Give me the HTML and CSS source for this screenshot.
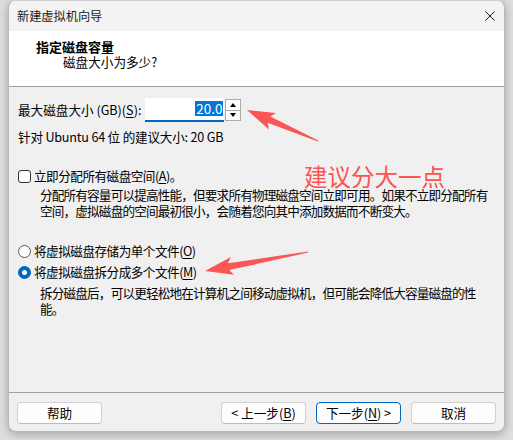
FILE: index.html
```html
<!DOCTYPE html>
<html lang="zh-CN">
<head>
    <meta charset="UTF-8">
    <title>新建虚拟机向导</title>
    <link rel="stylesheet" href="styles.css">
</head>
<body>
    <div class="window">
        <!-- Title bar -->
        <div class="titlebar">
            <span class="title">新建虚拟机向导</span>
            <svg class="close" width="10" height="10" viewBox="0 0 10 10">
                <path d="M0.5 0.5 L9.5 9.5 M9.5 0.5 L0.5 9.5" stroke="#1a1a1a" stroke-width="1" fill="none"/>
            </svg>
        </div>

        <!-- Page header -->
        <div class="header">
            <div class="header-title">指定磁盘容量</div>
            <div class="header-sub">磁盘大小为多少?</div>
        </div>

        <!-- Page content -->
        <div class="content">
            <div class="size-row">
                <span class="size-label">最大磁盘大小 (GB)(<u>S</u>):</span>
                <div class="spin">
                    <div class="spin-input"><span class="selected">20.0</span></div>
                    <div class="spin-btns">
                        <div class="spin-btn"><span class="tri-up"></span></div>
                        <div class="spin-btn"><span class="tri-down"></span></div>
                    </div>
                </div>
            </div>
            <div class="hint">针对 Ubuntu 64 位 的建议大小: 20 GB</div>

            <div class="option check-option">
                <span class="checkbox"></span>立即分配所有磁盘空间(<u>A</u>)。
            </div>
            <p class="desc">分配所有容量可以提高性能，但要求所有物理磁盘空间立即可用。如果不立即分配所有<br>空间，虚拟磁盘的空间最初很小，会随着您向其中添加数据而不断变大。</p>

            <div class="option radio-first">
                <span class="radio"></span>将虚拟磁盘存储为单个文件(<u>O</u>)
            </div>
            <div class="option radio-second">
                <span class="radio checked"></span>将虚拟磁盘拆分成多个文件(<u>M</u>)
            </div>
            <p class="desc desc-split">拆分磁盘后，可以更轻松地在计算机之间移动虚拟机，但可能会降低大容量磁盘的性<br>能。</p>
        </div>

        <!-- Buttons -->
        <div class="footer">
            <button class="btn">帮助</button>
            <div class="nav-btns">
                <button class="btn">&lt; 上一步(<u>B</u>)</button>
                <button class="btn default">下一步(<u>N</u>) &gt;</button>
                <button class="btn">取消</button>
            </div>
        </div>
    </div>

    <!-- Red notes drawn on top -->
    <span class="note">建议分大一点</span>
    <svg class="arrows" width="513" height="440" viewBox="0 0 513 440">
        <polygon points="247,110 276,113 270.4,116.4 318.2,140.5 317.8,141.5 267.6,122.8 269,129.4" fill="#fb5656"/>
        <polygon points="205,271 230.9,257 228,263.3 307.9,251.4 308.1,252.6 229.2,270.1 234.1,274.8" fill="#fb5656"/>
    </svg>
</body>
</html>
```

FILE: styles.css
```css
/* Page */
body {
    margin: 0;
    width: 513px;
    height: 440px;
    background: #dedede;
    font-family: "Noto Sans CJK SC", "Microsoft YaHei", sans-serif;
    font-size: 12.6px;
    color: #000;
    position: relative;
    overflow: hidden;
}

u {
    text-decoration: underline;
    text-underline-offset: 2px;
}

/* Dialog window */
.window {
    box-sizing: border-box;
    margin-left: 8px;
    width: 497px;
    height: 432px;
    border: 1px solid #b9b9b9;
    border-top-color: #cfcfcf;
    border-radius: 8px;
    background: #f0f0f0;
    box-shadow: 0 2px 10px rgba(0, 0, 0, 0.28);
    display: flex;
    flex-direction: column;
    overflow: hidden;
}

.titlebar {
    height: 30px;
    background: #f3f3f3;
    display: flex;
    align-items: center;
    justify-content: space-between;
    padding: 0 9px 0 8px;
    flex-shrink: 0;
}

.title {
    font-size: 12.2px;
    color: #1a1a1a;
}

.close {
    margin-top: -1px;
}

/* White header */
.header {
    height: 56px;
    background: #fff;
    border-bottom: 1px solid #a0a0a0;
    padding: 8px 0 0 27px;
    box-sizing: border-box;
    flex-shrink: 0;
}

.header-title {
    font-weight: bold;
    font-size: 13px;
    line-height: 15px;
}

.header-sub {
    line-height: 15px;
    padding-left: 27px;
}

/* Content */
.content {
    flex: 1;
    padding: 11px 0 0 9px;
    white-space: nowrap;
}

.size-row {
    display: flex;
    align-items: center;
    height: 24px;
}

.size-label {
    line-height: 16px;
}

.spin {
    display: flex;
    margin-left: 4px;
}

.spin-input {
    width: 79px;
    height: 24px;
    box-sizing: border-box;
    background: #fff;
    border-bottom: 2px solid #0067c0;
    display: flex;
    justify-content: flex-end;
    align-items: center;
    padding-right: 1px;
    padding-bottom: 1px;
}

.selected {
    background: #0078d7;
    color: #fff;
    font-size: 13.5px;
    line-height: 15px;
    padding: 0 1px;
}

.spin-btns {
    margin-left: 1px;
    margin-top: 1px;
    width: 16px;
    height: 22px;
    box-sizing: border-box;
    border: 1px solid #adadad;
    display: flex;
    flex-direction: column;
    background: #fdfdfd;
}

.spin-btn {
    flex: 1;
    display: flex;
    align-items: center;
    justify-content: center;
}

.spin-btn + .spin-btn {
    border-top: 1px solid #adadad;
}

.tri-up {
    border-left: 3.5px solid transparent;
    border-right: 3.5px solid transparent;
    border-bottom: 4px solid #000;
}

.tri-down {
    border-left: 3.5px solid transparent;
    border-right: 3.5px solid transparent;
    border-top: 4px solid #000;
}

.hint {
    margin-top: 7px;
    line-height: 16px;
    letter-spacing: -0.2px;
}

/* Options */
.option {
    display: flex;
    align-items: center;
    line-height: 16px;
    letter-spacing: -0.5px;
}

.check-option {
    margin-top: 23px;
}

.radio-first {
    margin-top: 24px;
}

.radio-second {
    margin-top: 5px;
}

.checkbox {
    width: 13px;
    height: 13px;
    box-sizing: border-box;
    border: 1px solid #333;
    border-radius: 3px;
    background: #fff;
    margin-right: 3px;
}

.radio {
    width: 13px;
    height: 13px;
    box-sizing: border-box;
    border: 1px solid #5a5a5a;
    border-radius: 50%;
    background: #fff;
    margin-right: 3px;
    display: flex;
    align-items: center;
    justify-content: center;
}

.radio.checked {
    border-color: #0067c0;
    background: #0067c0;
}

.radio.checked::after {
    content: "";
    width: 5px;
    height: 5px;
    border-radius: 50%;
    background: #fff;
}

.desc {
    margin: 3px 0 0 22px;
    line-height: 16px;
    letter-spacing: -0.82px;
}

.desc-split {
    margin-top: 5px;
}

/* Footer buttons */
.footer {
    height: 39px;
    border-top: 1px solid #a0a0a0;
    box-sizing: border-box;
    display: flex;
    justify-content: space-between;
    align-items: flex-start;
    padding: 9px 8px 0 8px;
    flex-shrink: 0;
}

.nav-btns {
    display: flex;
    gap: 10px;
}

.btn {
    width: 85px;
    height: 22px;
    box-sizing: border-box;
    border: 1px solid #d0d0d0;
    border-bottom-color: #bdbdbd;
    border-radius: 4px;
    background: #fdfdfd;
    font-family: inherit;
    font-size: 12.6px;
    color: #000;
    padding: 0;
    line-height: 18px;
}

.btn.default {
    border: 1px solid #0067c0;
}

/* Red notes */
.note {
    position: absolute;
    left: 304px;
    top: 162px;
    font-size: 23.5px;
    line-height: 28px;
    color: #ff5252;
}

.arrows {
    position: absolute;
    left: 0;
    top: 0;
    pointer-events: none;
}
```
